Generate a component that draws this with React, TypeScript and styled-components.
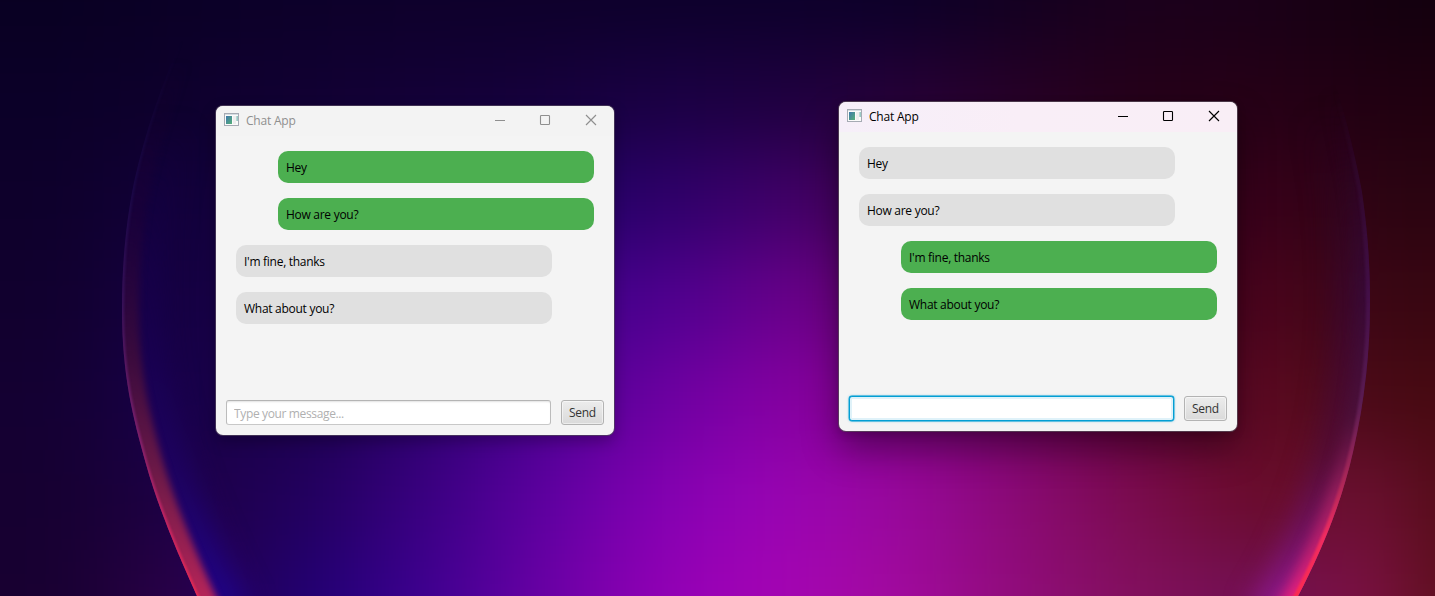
import React from 'react';
import styled, { createGlobalStyle, css } from 'styled-components';

const GlobalStyle = createGlobalStyle`
  html, body { margin: 0; padding: 0; }
  body { overflow: hidden; background: #0d0028; }
  *, *::before, *::after { box-sizing: border-box; }
`;

const Desktop = styled.main`
  position: relative;
  width: 1435px;
  height: 596px;
  overflow: hidden;
  font-family: 'Open Sans', 'Noto Sans', sans-serif;
  font-size: 12px;
  color: #000;
`;

const WallpaperSvg = styled.svg`
  display: block;
`;

const Frame = styled.section<{ $x: number; $y: number; $active: boolean }>`
  position: absolute;
  left: ${(p) => p.$x}px;
  top: ${(p) => p.$y}px;
  display: flex;
  flex-direction: column;
  width: 398px;
  height: 329px;
  border-radius: 7px;
  background: #f4f4f4;
  box-shadow: ${(p) =>
    p.$active
      ? '0 0 0 1px rgba(90, 75, 90, 0.75), 0 2px 10px rgba(0, 0, 0, 0.2), 0 18px 36px rgba(0, 0, 0, 0.38)'
      : '0 0 0 1px rgba(80, 65, 95, 0.75), 0 6px 16px rgba(0, 0, 0, 0.28)'};
`;

const TitleBar = styled.header<{ $active: boolean }>`
  display: flex;
  align-items: center;
  height: 30px;
  flex: none;
  padding-left: 8px;
  border-radius: 7px 7px 0 0;
  color: ${(p) => (p.$active ? '#000' : '#8f8f8f')};
  background: ${(p) => (p.$active ? 'linear-gradient(90deg, #f6eff9, #f9eef7 45%, #f9eef6)' : '#f3f3f3')};
`;

const Title = styled.h1`
  flex: 1;
  margin: 0 0 0 7px;
  font-size: 12px;
  font-weight: 400;
  line-height: 16px;
  letter-spacing: -0.2px;
`;

const CaptionButton = styled.button`
  display: flex;
  align-items: center;
  justify-content: center;
  width: 46px;
  height: 30px;
  padding: 0 0 2px;
  border: 0;
  background: none;
  color: inherit;
`;

const Messages = styled.div`
  display: flex;
  flex: 1;
  flex-direction: column;
  gap: 15px;
  padding: 15px 20px;
`;

const Bubble = styled.div<{ $mine: boolean }>`
  width: 316px;
  height: 32px;
  padding: 8px;
  border-radius: 10px;
  line-height: 17px;
  letter-spacing: -0.28px;
  align-self: ${(p) => (p.$mine ? 'flex-end' : 'flex-start')};
  background: ${(p) => (p.$mine ? '#4caf50' : '#e0e0e0')};
`;

const Composer = styled.form`
  display: flex;
  gap: 10px;
  padding: 0 10px 10px;
`;

const focusRing = css`
  border-color: #039ed3;
  box-shadow: 0 0 0 0.4px #039ed3, 0 0 2px 1px rgba(3, 158, 211, 0.25), inset 0 0 0 2px #e0f2f9;
`;

const restRing = css`
  border-color: #b4b4b4 #bcbcbc #c8c8c8;
  box-shadow: inset 0 2px 2px -1px #e2e2e2;
`;

const MessageInput = styled.input<{ $focused: boolean }>`
  width: 325px;
  height: 25px;
  padding: 1px 7px 0;
  border: 1px solid;
  border-radius: 3px;
  outline: 0;
  background: #fff;
  font: inherit;
  letter-spacing: -0.36px;
  ${(p) => (p.$focused ? focusRing : restRing)}
  &::placeholder { color: #b0b0b0; opacity: 1; }
`;

const SendButton = styled.button`
  width: 43px;
  height: 25px;
  padding: 0;
  border: 1px solid #b3b3b3;
  border-radius: 3px;
  background: linear-gradient(#ececec, #dadada);
  box-shadow: inset 0 0 0 1px rgba(255, 255, 255, 0.5);
  color: #333;
  font: inherit;
  line-height: 23px;
  letter-spacing: -0.3px;
`;

/* Horizontal colour stops of the wallpaper, one row for every 100px of height. */
const stopsX = [60, 180, 300, 420, 540, 660, 780, 900, 1020, 1140, 1260, 1380, 1435];
const rows = [
  ['#090022', '#0b0026', '#0c0029', '#0e002b', '#0e002b', '#0d002b', '#0d002b', '#0c0029', '#130020', '#1b001c', '#1a0018', '#14000f', '#12000e'],
  ['#0b0028', '#0e002d', '#110032', '#130036', '#15003a', '#1a0044', '#1e0040', '#260038', '#260026', '#250018', '#260016', '#200012', '#20000e'],
  ['#0e002b', '#12003a', '#150044', '#1b0058', '#220066', '#2c006a', '#40006a', '#460052', '#42003c', '#3c0022', '#38001a', '#2c0412', '#2a0410'],
  ['#11002e', '#160044', '#18004a', '#2a0074', '#400088', '#4c0090', '#68008c', '#6c0072', '#600050', '#54002a', '#4a041c', '#3a0614', '#380610'],
  ['#140032', '#18004c', '#1b004a', '#2c006c', '#480090', '#6c00a2', '#8600a4', '#84008a', '#760068', '#66003a', '#5c0a20', '#480a16', '#480a10'],
  ['#160031', '#1e0046', '#20005c', '#380080', '#5c00a0', '#8400b2', '#9a04b4', '#98089c', '#8a0a74', '#7a0c4c', '#680c28', '#6c1034', '#540c16'],
  ['#180031', '#2c0048', '#1e0070', '#3c0090', '#6800a4', '#9200b6', '#a604b4', '#a20a9e', '#900c7a', '#82105c', '#701054', '#7e1042', '#5c101c'],
];

const leftEdge = 'M182 38 C162 84 146 128 134 182 C124 232 122 274 122 310 C122 375 133 418 146 464 C159 510 178 554 197 596 L212 628';
const rightEdge = 'M1328 60 C1346 114 1356 160 1362 192 C1369 240 1370 275 1370 304 C1370 350 1365 400 1353 452 C1341 504 1322 550 1298 596 L1280 628';

function Wallpaper() {
  return (
    <WallpaperSvg width="1435" height="596" viewBox="0 0 1435 596" aria-hidden="true">
      <defs>
        {rows.map((row, i) => (
          <linearGradient key={i} id={`row${i}`} gradientUnits="userSpaceOnUse" x1="0" y1="0" x2="1435" y2="0">
            {row.map((c, j) => (
              <stop key={j} offset={stopsX[j] / 1435} stopColor={c} />
            ))}
          </linearGradient>
        ))}
        <filter id="melt" filterUnits="userSpaceOnUse" x="-200" y="-250" width="1835" height="1100" colorInterpolationFilters="sRGB">
          <feGaussianBlur stdDeviation="36 36" />
        </filter>
        {[1, 4, 7, 14].map((n) => (
          <filter key={n} id={`soft${n}`} filterUnits="userSpaceOnUse" x="0" y="-60" width="1435" height="760" colorInterpolationFilters="sRGB">
            <feGaussianBlur stdDeviation={n * 0.9} />
          </filter>
        ))}
        <clipPath id="orb">
          <path d={`${leftEdge} L1280 628 C1286 618 1292 607 1298 596 C1322 550 1341 504 1353 452 C1365 400 1370 350 1370 304 C1370 275 1369 240 1362 192 C1356 160 1346 114 1328 60 L1320 38 Z`} />
        </clipPath>
        <linearGradient id="leftLine" gradientUnits="userSpaceOnUse" x1="0" y1="40" x2="0" y2="596">
          <stop offset="0" stopColor="#1a0848" stopOpacity="0" />
          <stop offset="0.25" stopColor="#1c0e52" stopOpacity="0.5" />
          <stop offset="0.48" stopColor="#3c1460" stopOpacity="0.85" />
          <stop offset="0.7" stopColor="#7c2070" />
          <stop offset="0.85" stopColor="#c02464" />
          <stop offset="1" stopColor="#e82a52" />
        </linearGradient>
        <linearGradient id="leftBand" gradientUnits="userSpaceOnUse" x1="0" y1="60" x2="0" y2="596">
          <stop offset="0" stopColor="#200030" stopOpacity="0" />
          <stop offset="0.28" stopColor="#200034" stopOpacity="0.4" />
          <stop offset="0.55" stopColor="#400c3a" stopOpacity="0.85" />
          <stop offset="0.78" stopColor="#701a48" />
          <stop offset="1" stopColor="#b42458" />
        </linearGradient>
        <linearGradient id="leftGlow" gradientUnits="userSpaceOnUse" x1="0" y1="120" x2="0" y2="596">
          <stop offset="0" stopColor="#160050" stopOpacity="0" />
          <stop offset="0.4" stopColor="#180050" stopOpacity="0.7" />
          <stop offset="0.75" stopColor="#1e0264" stopOpacity="0.9" />
          <stop offset="1" stopColor="#200284" />
        </linearGradient>
        <linearGradient id="rightLine" gradientUnits="userSpaceOnUse" x1="0" y1="90" x2="0" y2="596">
          <stop offset="0" stopColor="#30103a" stopOpacity="0" />
          <stop offset="0.4" stopColor="#481250" stopOpacity="0.7" />
          <stop offset="0.62" stopColor="#602058" stopOpacity="0.8" />
          <stop offset="0.78" stopColor="#b02858" />
          <stop offset="0.88" stopColor="#f02c60" />
          <stop offset="1" stopColor="#fa2c50" />
        </linearGradient>
        <linearGradient id="rightBand" gradientUnits="userSpaceOnUse" x1="0" y1="90" x2="0" y2="596">
          <stop offset="0" stopColor="#280028" stopOpacity="0" />
          <stop offset="0.4" stopColor="#360a3c" stopOpacity="0.6" />
          <stop offset="0.65" stopColor="#4c123c" stopOpacity="0.8" />
          <stop offset="0.8" stopColor="#a02060" stopOpacity="0.9" />
          <stop offset="1" stopColor="#e8207c" />
        </linearGradient>
        <linearGradient id="rightGlow" gradientUnits="userSpaceOnUse" x1="0" y1="110" x2="0" y2="596">
          <stop offset="0" stopColor="#2c0830" stopOpacity="0" />
          <stop offset="0.4" stopColor="#3a0834" stopOpacity="0.7" />
          <stop offset="0.7" stopColor="#500c38" stopOpacity="0.8" />
          <stop offset="1" stopColor="#8a1888" />
        </linearGradient>
      </defs>
      <g filter="url(#melt)">
        {rows.map((_, i) => (
          <rect
            key={i}
            x="-150"
            y={i === 0 ? -200 : i * 100 - 50}
            width="1735"
            height={i === 0 ? 251 : i === 6 ? 280 : 101}
            fill={`url(#row${i})`}
          />
        ))}
      </g>
      <g clipPath="url(#orb)" fill="none">
        <path d={leftEdge} stroke="url(#leftGlow)" strokeWidth="88" filter="url(#soft14)" />
        <path d={leftEdge} stroke="url(#leftBand)" strokeWidth="34" filter="url(#soft4)" />
        <path d={leftEdge} stroke="url(#leftLine)" strokeWidth="4" filter="url(#soft1)" />
        <path d={rightEdge} stroke="url(#rightGlow)" strokeWidth="74" filter="url(#soft14)" />
        <path d={rightEdge} stroke="url(#rightBand)" strokeWidth="26" filter="url(#soft7)" />
        <path d={rightEdge} stroke="url(#rightLine)" strokeWidth="8" filter="url(#soft1)" />
      </g>
    </WallpaperSvg>
  );
}

const IconSvg = styled.svg`
  flex: none;
  margin-bottom: 3px;
`;

function AppIcon() {
  return (
    <IconSvg width="15" height="13" viewBox="0 0 15 13" aria-hidden="true">
      <defs>
        <linearGradient id="iconPane" x1="0" y1="0" x2="1" y2="1">
          <stop offset="0" stopColor="#3f78ac" />
          <stop offset="1" stopColor="#55b078" />
        </linearGradient>
      </defs>
      <rect x="0.5" y="0.5" width="14" height="12" fill="#fbfbfb" stroke="#a6abb4" />
      <rect x="1" y="1" width="13" height="1" fill="#d5dde2" />
      <rect x="2" y="3" width="6" height="8" fill="url(#iconPane)" />
      <rect x="9" y="3" width="3" height="8" fill="#eeeeee" />
      <rect x="12.6" y="3" width="1" height="5" fill="#5aa8a0" />
    </IconSvg>
  );
}

function CaptionButtons() {
  return (
    <>
      <CaptionButton aria-label="Minimize">
        <svg width="12" height="12" viewBox="0 0 12 12" stroke="currentColor" fill="none">
          <path d="M2 6.5H12" />
        </svg>
      </CaptionButton>
      <CaptionButton aria-label="Maximize">
        <svg width="12" height="12" viewBox="0 0 12 12" stroke="currentColor" fill="none">
          <rect x="1.5" y="1.5" width="9" height="9" rx="0.8" strokeWidth="1.1" />
        </svg>
      </CaptionButton>
      <CaptionButton aria-label="Close">
        <svg width="12" height="12" viewBox="0 0 12 12" stroke="currentColor" fill="none">
          <path d="M1 1L11 11M11 1L1 11" strokeWidth="1.15" />
        </svg>
      </CaptionButton>
    </>
  );
}

const messages = [
  { from: 'ann', text: 'Hey' },
  { from: 'ann', text: 'How are you?' },
  { from: 'bob', text: "I'm fine, thanks" },
  { from: 'bob', text: 'What about you?' },
];

function ChatWindow({ x, y, user, active }: { x: number; y: number; user: string; active: boolean }) {
  return (
    <Frame $x={x} $y={y} $active={active}>
      <TitleBar $active={active}>
        <AppIcon />
        <Title>Chat App</Title>
        <CaptionButtons />
      </TitleBar>
      <Messages>
        {messages.map((m) => (
          <Bubble key={m.text} $mine={m.from === user}>
            {m.text}
          </Bubble>
        ))}
      </Messages>
      <Composer onSubmit={(e) => e.preventDefault()}>
        <MessageInput $focused={active} placeholder={active ? '' : 'Type your message...'} aria-label="Message" />
        <SendButton type="submit">Send</SendButton>
      </Composer>
    </Frame>
  );
}

export default function App() {
  return (
    <>
      <GlobalStyle />
      <Desktop>
        <Wallpaper />
        <ChatWindow x={216} y={106} user="ann" active={false} />
        <ChatWindow x={839} y={102} user="bob" active />
      </Desktop>
    </>
  );
}
